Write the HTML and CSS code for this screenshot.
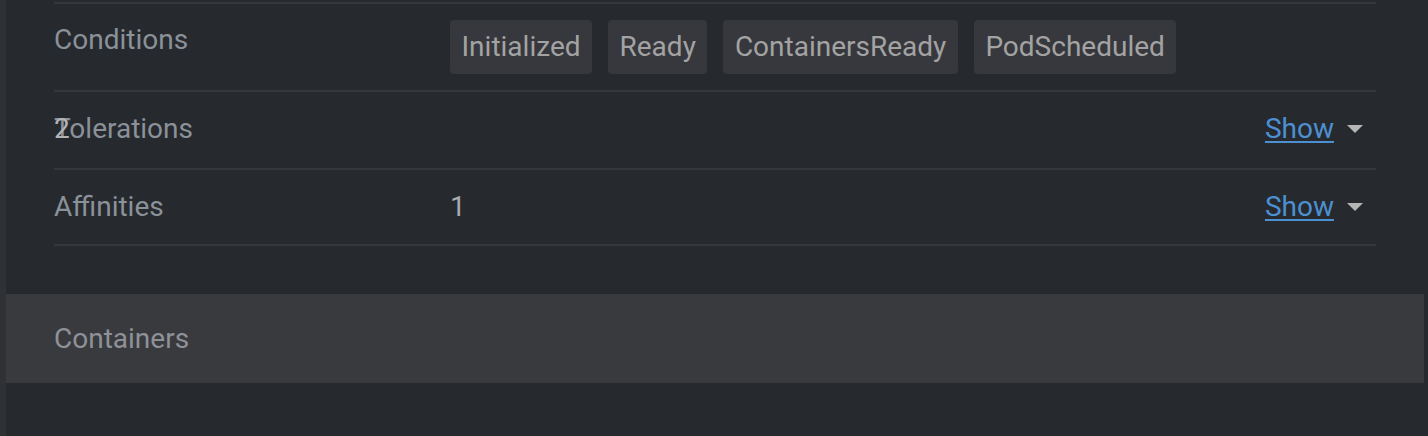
FILE: index.html
```
<!DOCTYPE html>
<html lang="en">
<head>
    <meta charset="UTF-8">
    <meta name="viewport" content="width=device-width, initial-scale=1.0">
    <link rel="stylesheet" href="styles.css">
    <title>Pod</title>
</head>
<body>
    <div class="painel">
        <section class="detalhes">
            <!-- Condicoes -->
            <div class="linha">
                <div class="rotulo">Conditions</div>
                <div class="chips">
                    <span class="chip">Initialized</span>
                    <span class="chip">Ready</span>
                    <span class="chip">ContainersReady</span>
                    <span class="chip">PodScheduled</span>
                </div>
            </div>
            <!-- Tolerations -->
            <div class="linha">
                <div class="rotulo"><span class="contador">2</span>Tolerations</div>
                <div class="valor"></div>
                <button class="mostrar">Show <span class="seta"></span></button>
            </div>
            <!-- Affinities -->
            <div class="linha">
                <div class="rotulo">Affinities</div>
                <div class="valor">1</div>
                <button class="mostrar">Show <span class="seta"></span></button>
            </div>
        </section>

        <div class="faixa">Containers</div>
    </div>
</body>
</html>
```

FILE: styles.css
```
body {
    margin: 0;
    padding: 0;
    background: #26292e;
    font-family: 'Roboto', 'Liberation Sans', sans-serif;
    font-size: 28px;
    min-height: 436px;
}

.painel {
    width: 1418px;
    min-height: 436px;
    border-left: 6px solid #303135;
    padding-top: 2px;
}

.detalhes {
    margin: 0 48px;
    border-top: 2px solid #34373c;
}

.linha {
    display: flex;
    align-items: flex-start;
    padding: 16px 0;
    border-bottom: 2px solid #34373c;
}

.linha:last-child {
    padding-bottom: 14px;
}

.rotulo {
    position: relative;
    width: 396px;
    flex-shrink: 0;
    line-height: 42px;
    padding-bottom: 2px;
    color: #8b9199;
}

.linha:first-child .rotulo {
    line-height: 40px;
}

.contador {
    position: absolute;
    left: 0;
    top: 0;
    color: #b3b3b3;
}

.valor {
    flex: 1;
    line-height: 42px;
    color: #a9abae;
}

.chips {
    display: flex;
    gap: 16px;
}

.chip {
    background: #37383d;
    color: #a3a3a3;
    height: 54px;
    line-height: 53px;
    padding: 0 11.5px;
    border-radius: 4px;
}

.mostrar {
    display: flex;
    align-items: center;
    gap: 13px;
    background: none;
    border: none;
    padding: 0 13px 0 0;
    margin-top: -2px;
    height: 44px;
    font-family: inherit;
    font-size: 28px;
    color: #4d90d2;
    text-decoration: underline;
    text-decoration-thickness: 2px;
    text-underline-offset: 3px;
    cursor: pointer;
}

.seta {
    width: 0;
    height: 0;
    border-left: 8px solid transparent;
    border-right: 8px solid transparent;
    border-top: 8px solid #b5b5b5;
    margin-top: 2px;
}

.faixa {
    margin-top: 48px;
    background: #393a3e;
    height: 89px;
    line-height: 89px;
    padding: 0 48px;
    color: #8e9198;
}
```
